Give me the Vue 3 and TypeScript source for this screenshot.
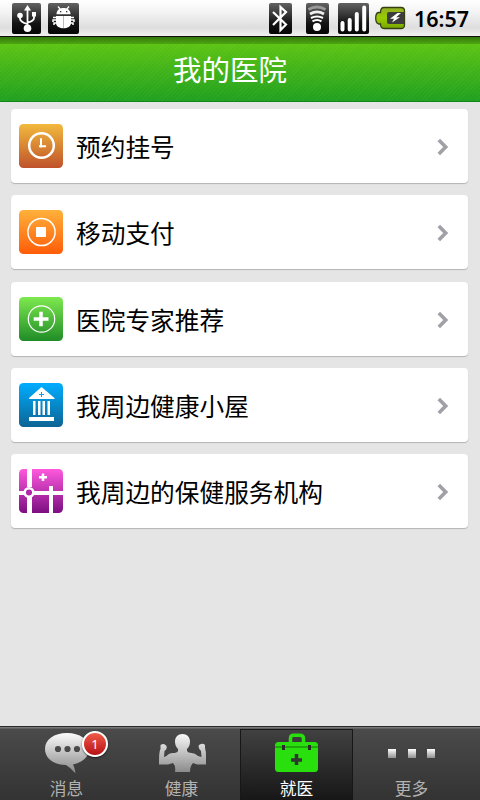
<script setup lang="ts">
interface MenuItem {
  id: string
  label: string
  from: string
  to: string
}

interface Tab {
  id: string
  label: string
  active?: boolean
  badge?: number
}

const items: MenuItem[] = [
  { id: 'clock', label: '预约挂号', from: '#f2b93d', to: '#bf522b' },
  { id: 'pay', label: '移动支付', from: '#ffb13b', to: '#ff5c08' },
  { id: 'expert', label: '医院专家推荐', from: '#7ee94f', to: '#1f8c27' },
  { id: 'house', label: '我周边健康小屋', from: '#00adff', to: '#0d6494' },
  { id: 'map', label: '我周边的保健服务机构', from: '#ff59de', to: '#7c0e82' },
]

const tabs: Tab[] = [
  { id: 'message', label: '消息', badge: 1 },
  { id: 'health', label: '健康' },
  { id: 'doctor', label: '就医', active: true },
  { id: 'more', label: '更多' },
]
</script>

<template>
  <div class="screen">
    <header class="status">
      <svg class="usb" width="29" height="31" viewBox="12 3 29 31">
        <rect x="12" y="3" width="29" height="31" rx="2" fill="url(#tile)" />
        <defs>
          <linearGradient id="tile" x1="0" y1="0" x2="0" y2="1">
            <stop offset="0" stop-color="#626262" />
            <stop offset=".35" stop-color="#393939" />
            <stop offset=".65" stop-color="#141414" />
            <stop offset="1" stop-color="#050505" />
          </linearGradient>
        </defs>
        <path d="M27.500 9V26M20 17V18.500Q20 22 27.500 24M34 15V18Q34 21 27.500 22.500" fill="none" stroke="#fff" stroke-width="1.800" />
        <path d="M27.500 5L31 10.500H24Z" fill="#fff" />
        <circle cx="20" cy="15.500" r="2.800" fill="#fff" />
        <rect x="32" y="12" width="4" height="4.500" fill="#fff" />
        <circle cx="27.500" cy="28.200" r="3.800" fill="#fff" />
      </svg>
      <svg class="debug" width="31" height="31" viewBox="48 3 31 31">
        <rect x="48" y="3" width="31" height="31" rx="2" fill="url(#tile)" />
        <path d="M56.500 14.300C56.500 10 59.500 8 63.500 8S70.500 10 70.500 14.300Z" fill="#fff" />
        <path d="M58 6.500L60.500 9.500M69 6.500L66.500 9.500" stroke="#fff" stroke-width="1.300" />
        <path d="M56 16H71V23C71 30 56 30 56 23Z" fill="#fff" />
        <path d="M56 17.500H53M56 20H53V22M56 23H54V25M71 17.500H74M71 20H74V22M71 23H73V25" fill="none" stroke="#fff" stroke-width="1.500" />
        <path d="M63.500 16V28" stroke="#bbb" stroke-width="1" />
        <rect x="60" y="11" width="1.300" height="1.300" fill="#333" />
        <rect x="66" y="11" width="1.300" height="1.300" fill="#333" />
      </svg>
      <svg class="bluetooth" width="23" height="31" viewBox="269 3 23 31">
        <rect x="269" y="3" width="23" height="31" rx="2" fill="url(#tile)" />
        <path d="M273 12L286 24.500L280.500 30V7L286 12L273 25" fill="none" stroke="#fff" stroke-width="2.200" />
      </svg>
      <svg class="wifi" width="23" height="31" viewBox="306 3 23 31">
        <rect x="306" y="3" width="23" height="31" rx="2" fill="url(#tile)" />
        <path d="M308.500 9.500Q317 4.500 325.500 9.500" fill="none" stroke="#999" stroke-width="3" />
        <path d="M310 14Q317 9.800 324 14" fill="none" stroke="#eee" stroke-width="2.700" />
        <path d="M311 18Q317 14.800 323 18M312.500 21.300Q317 18.600 321.500 21.300" fill="none" stroke="#fff" stroke-width="2" />
        <circle cx="317" cy="27" r="4" fill="#fff" />
      </svg>
      <svg class="signal" width="31" height="31" viewBox="338 3 31 31">
        <rect x="338" y="3" width="31" height="31" rx="2" fill="url(#tile)" />
        <path d="M342.500 23V29.500M349.700 20V29.500M356.800 14V29.500M364.200 7.500V29.500" stroke="#fff" stroke-width="4" stroke-linecap="round" />
      </svg>
      <svg class="battery" width="31" height="24" viewBox="375 6 31 24">
        <defs>
          <linearGradient id="cell" x1="0" y1="0" x2="0" y2="1">
            <stop offset="0" stop-color="#93ae27" />
            <stop offset=".5" stop-color="#99cc00" />
            <stop offset="1" stop-color="#77a500" />
          </linearGradient>
        </defs>
        <path d="M384 7.500H401Q404.500 7.500 404.500 11V25Q404.500 28.500 401 28.500H384Q380.500 28.500 380.500 24H378.500Q375.700 23 375.700 18T378.500 12.500H380.500Q380.500 7.500 384 7.500Z" fill="url(#cell)" stroke="#344014" stroke-width="1.300" />
        <path d="M389 12H404V24H389Q387 24 387 22V14Q387 12 389 12Z" fill="#3d3d3d" />
        <path d="M397.500 13L390 18.700H394L392 22.500L400 17.300H396.200L401 13Z" fill="#fff" />
      </svg>
      <time>16:57</time>
    </header>

    <div class="titlebar"><h1>我的医院</h1></div>

    <main class="list">
      <a v-for="item in items" :key="item.id" class="card">
        <svg class="icon" viewBox="0 0 44 44">
          <defs>
            <linearGradient :id="`bg-${item.id}`" x1="0" y1="0" x2="0" y2="1">
              <stop offset="0" :stop-color="item.from" />
              <stop offset="1" :stop-color="item.to" />
            </linearGradient>
          </defs>
          <rect width="44" height="44" rx="4.500" :fill="`url(#bg-${item.id})`" />
          <g v-if="item.id === 'clock'" fill="none" stroke="#fff">
            <circle cx="22.500" cy="21.500" r="12.300" stroke-width="2.500" />
            <path d="M22 14.200V23.500M20 22.300H27" stroke-width="2" />
          </g>
          <g v-else-if="item.id === 'pay'">
            <circle cx="22.500" cy="22" r="13.600" fill="none" stroke="#fff" stroke-width="1.500" />
            <rect x="17" y="17" width="10" height="10" fill="#fff" />
          </g>
          <g v-else-if="item.id === 'expert'" fill="none" stroke="#fff">
            <circle cx="22.500" cy="22" r="13.200" stroke-width="1.200" />
            <path d="M22 14.700V29.300M14.700 22H29.500" stroke-width="3.500" />
          </g>
          <g v-else-if="item.id === 'house'" fill="#fff">
            <path d="M22.500 4L35.500 15V16H10V15Z" />
            <path d="M14 18h2.500v14h-2.500zM19 18h2.500v14h-2.500zM23.500 18h2.500v14h-2.500zM28.500 18h2.500v14h-2.500zM10 34h25v4h-25z" />
            <path d="M22.500 9V14M20 11.500H25" stroke="#08a0e6" stroke-width="1" />
          </g>
          <g v-else fill="none" stroke="#fff">
            <path d="M10.500 0V18M10.500 28V44" stroke-width="5" />
            <path d="M0 24H5M14 24H44M32 17V44" stroke-width="4" />
            <circle cx="10" cy="23.500" r="4.300" stroke-width="2.500" fill="#b027aa" />
            <path d="M24 4.500V12M20 8.300H28" stroke-width="2.500" />
          </g>
        </svg>
        <span class="label">{{ item.label }}</span>
        <svg class="chevron" viewBox="0 0 12 18">
          <path d="M1.800 2L8.700 9L1.800 16" fill="none" stroke="#a0a0a6" stroke-width="3.600" />
        </svg>
      </a>
    </main>

    <nav class="tabs">
      <a v-for="tab in tabs" :key="tab.id" class="tab" :class="{ active: tab.active }">
        <svg class="glyph" width="72" height="44" viewBox="0 0 72 44">
          <defs>
            <linearGradient id="silver" gradientUnits="userSpaceOnUse" x1="0" y1="4" x2="0" y2="43">
              <stop offset="0" stop-color="#fbfbfb" />
              <stop offset="1" stop-color="#8b8b8b" />
            </linearGradient>
            <linearGradient id="square" x1="0" y1="0" x2="0" y2="1">
              <stop offset="0" stop-color="#fff" />
              <stop offset="1" stop-color="#909090" />
            </linearGradient>
          </defs>
          <g v-if="tab.id === 'message'">
            <path d="M36 4C23 4 14 10.500 14 20S23 36 35 36Q40 39 44.500 44.500Q44 39 42 35.500C51 33.500 58 28 58 20C58 10.500 49 4 36 4Z" fill="url(#silver)" />
            <g fill="#4a4a4a"><circle cx="27" cy="20" r="3.100" /><circle cx="36.500" cy="20" r="3.100" /><circle cx="46" cy="20" r="3.100" /></g>
          </g>
          <path v-else-if="tab.id === 'health'" d="M36.500 5C32 5 29 8 29 12.500C29 16 30 18 32 20V22Q31 24 27 24Q23 24 20.500 27L18 28L18.500 22Q21.500 20 20.500 17Q18 13.500 14.500 16V20Q12.800 23 13 35.500H22L27 34Q30 37 29 43H44Q44 37 47 34L51 35.500H60V27Q60 22 59 19V16Q57 13.500 53 16Q51.500 18.500 55 22L55.500 28L52 27Q49 24 45.500 24Q42 24 41 22V20Q44 17 44 12.500C44 8 41 5 36.500 5Z" fill="url(#silver)" />
          <g v-else-if="tab.id === 'doctor'">
            <path d="M29.500 13V9.500Q29.500 6.300 32.500 6.300H38.500Q42.500 6.300 42.500 9.500V13" fill="none" stroke="#29df0d" stroke-width="3.500" />
            <rect x="14" y="13" width="43" height="30" rx="3.500" fill="#29df0d" />
            <path d="M14 18H57" stroke="#176f0c" />
            <path d="M22.500 16V21M48.500 16V21" stroke="#292d29" stroke-width="3" />
            <path d="M35.500 25V36M30 31H41" stroke="#303630" stroke-width="3.500" />
          </g>
          <g v-else fill="url(#square)">
            <rect x="12" y="20" width="8" height="9" /><rect x="32" y="20" width="8" height="9" /><rect x="51" y="20" width="8" height="9" />
          </g>
        </svg>
        <span v-if="tab.badge" class="badge">{{ tab.badge }}</span>
        <span class="name">{{ tab.label }}</span>
      </a>
    </nav>
  </div>
</template>

<style>
body {
  margin: 0;
}
</style>

<style scoped>
.screen {
  display: flex;
  flex-direction: column;
  width: 480px;
  height: 800px;
  overflow: hidden;
  background: #e5e5e5;
  font-family: "Noto Sans CJK SC", sans-serif;
}
.status {
  display: flex;
  flex: none;
  box-sizing: border-box;
  height: 37px;
  padding: 3px 0 0 12px;
  border-bottom: 1px solid #101010;
  background: linear-gradient(#fff 0, #f3f3f3 35%, #dedede 76%, #f0f0f0 100%);
}
.status svg {
  flex: none;
}
.debug {
  margin-left: 7px;
}
.bluetooth {
  margin-left: 190px;
}
.wifi {
  margin-left: 14px;
}
.signal {
  margin-left: 9px;
}
.battery {
  margin: 3px 0 0 6px;
}
time {
  margin-left: 8px;
  color: #000;
  font: 600 21.500px/32px "Noto Sans", sans-serif;
}
.titlebar {
  display: flex;
  flex: none;
  justify-content: center;
  box-sizing: border-box;
  height: 65px;
  border-bottom: 1px solid #16841c;
  background:
    linear-gradient(rgba(0, 40, 0, .5), rgba(0, 40, 0, .2) 7px, transparent 7px),
    repeating-linear-gradient(135deg, rgba(255, 255, 255, .035) 0 1px, transparent 1px 3px),
    linear-gradient(#64c812, #20a01f);
}
h1 {
  margin: 0 20px 0 0;
  color: #fff;
  font-size: 28.500px;
  font-weight: 400;
  line-height: 64px;
}
.list {
  display: flex;
  flex: 1;
  flex-direction: column;
  gap: 12.250px;
  padding: 7px 12px 0 11px;
}
.card {
  display: flex;
  align-items: center;
  box-sizing: border-box;
  height: 74px;
  padding: 0 19px 0 8px;
  border-radius: 4px;
  background: #fff;
  box-shadow: 0 1px 1px #b3b3b3;
}
.icon {
  flex: none;
  width: 44px;
  height: 44px;
}
.label {
  flex: 1;
  margin-left: 13px;
  color: #000;
  font-size: 24.700px;
  line-height: 36px;
  white-space: nowrap;
}
.chevron {
  flex: none;
  width: 12px;
  height: 18px;
  margin-top: 2px;
}
.tabs {
  display: flex;
  flex: none;
  gap: 2px;
  box-sizing: border-box;
  height: 74px;
  padding: 2px 10px 0;
  border-top: 1px solid #292929;
  background: linear-gradient(#777 0, #777 1px, #4a4a4a 2px, #333 100%);
}
.tab {
  position: relative;
  display: flex;
  flex: none;
  flex-direction: column;
  align-items: center;
  box-sizing: border-box;
  width: 113px;
  height: 71px;
  color: #b2b2b2;
}
.tab.active {
  border: 1px solid #171717;
  background: linear-gradient(#414141, #171717);
  color: #fff;
}
.glyph {
  flex: none;
}
.active .glyph {
  margin-top: -1px;
}
.name {
  margin-top: 2px;
  font-size: 16.700px;
  line-height: 26px;
}
.badge {
  position: absolute;
  top: 2px;
  left: 72px;
  box-sizing: border-box;
  width: 26px;
  height: 26px;
  border: 2px solid #fff;
  border-radius: 50%;
  background: linear-gradient(#ef5b49, #b81014);
  box-shadow: 0 1px 2px rgba(0, 0, 0, .6);
  color: #fff;
  font: 13px/22px "Noto Sans", sans-serif;
  text-align: center;
}
</style>
